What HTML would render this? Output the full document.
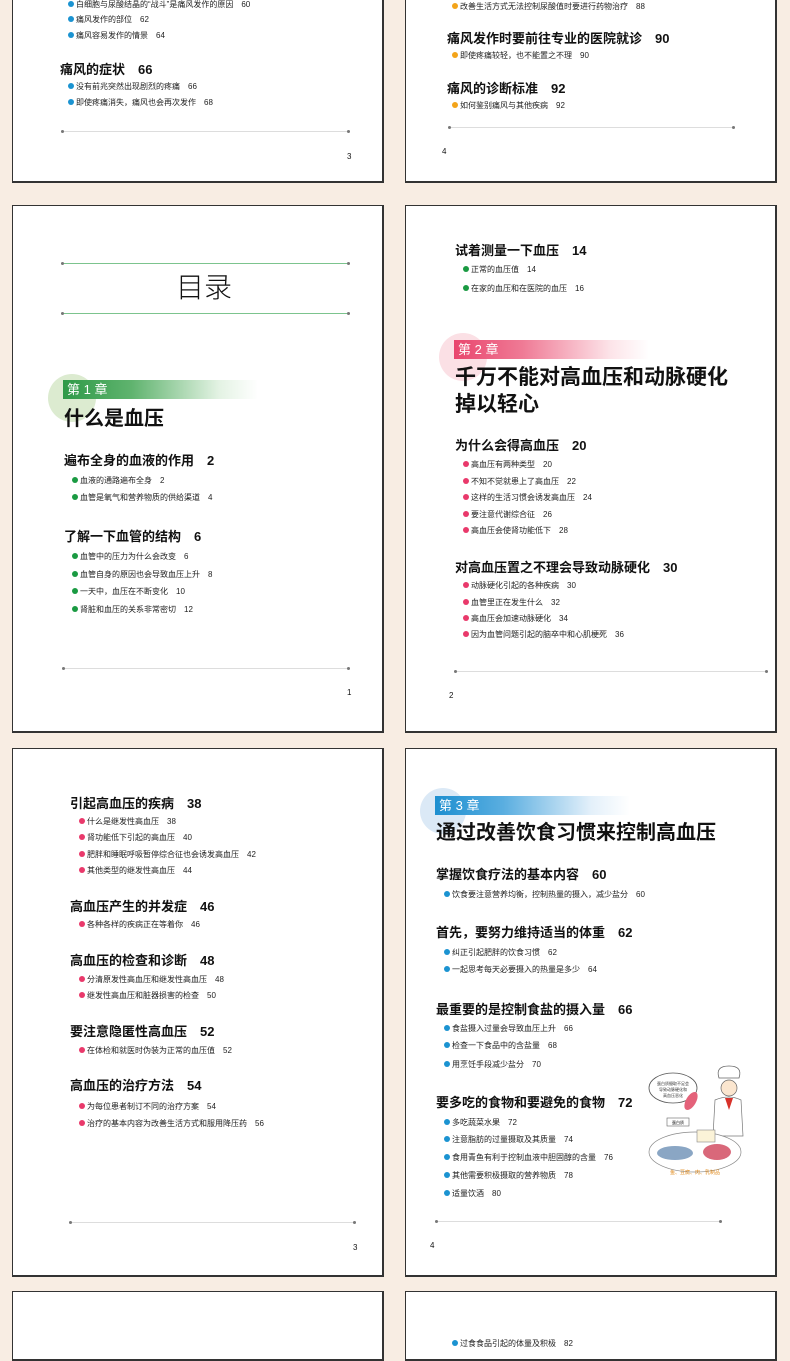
<!DOCTYPE html>
<html><head><meta charset="utf-8"><style>
*{margin:0;padding:0;box-sizing:border-box}
body{width:790px;height:1347px;background:#f8ede3;position:relative;overflow:hidden;font-family:"Liberation Sans","Noto Sans CJK SC",sans-serif;color:#111}
.p{position:absolute;background:#fff;border:1.5px solid #333;border-right-width:2px;border-bottom-width:2px}
.t{position:absolute;white-space:nowrap;line-height:1}
.h{font-size:13px;font-weight:bold}
.b{font-size:8px;color:#222}
.b i{display:inline-block;width:6px;height:6px;border-radius:50%;margin-right:2px;vertical-align:0}
.bl i{background:#1b93d1}.og i{background:#f3a41a}.gr i{background:#1a9a42}.pk i{background:#e9396b}
.ln{position:absolute;height:1px;background:#ddd}
.ln:before,.ln:after{content:"";position:absolute;top:-1px;width:3px;height:3px;border-radius:50%;background:#777}
.ln:before{left:0}.ln:after{right:0}
.ct{font-size:20px;font-weight:bold}
.pn{font-size:8px}
</style></head><body>

<!-- row1 -->
<div class="p" style="left:12px;top:-10px;width:372px;height:193px"></div>
<div class="p" style="left:405px;top:-10px;width:372px;height:193px"></div>
<div class="t b bl" style="left:68px;top:1px"><i></i>白细胞与尿酸结晶的“战斗”是痛风发作的原因　60</div>
<div class="t b bl" style="left:68px;top:16px"><i></i>痛风发作的部位　62</div>
<div class="t b bl" style="left:68px;top:32px"><i></i>痛风容易发作的情景　64</div>
<div class="t h" style="left:60px;top:63px">痛风的症状　66</div>
<div class="t b bl" style="left:68px;top:83px"><i></i>没有前兆突然出现剧烈的疼痛　66</div>
<div class="t b bl" style="left:68px;top:99px"><i></i>即使疼痛消失，痛风也会再次发作　68</div>
<div class="ln" style="left:61px;top:131px;width:289px"></div>
<div class="t pn" style="left:347px;top:153px">3</div>

<div class="t b og" style="left:452px;top:3px"><i></i>改善生活方式无法控制尿酸值时要进行药物治疗　88</div>
<div class="t h" style="left:447px;top:32px">痛风发作时要前往专业的医院就诊　90</div>
<div class="t b og" style="left:452px;top:52px"><i></i>即使疼痛较轻，也不能置之不理　90</div>
<div class="t h" style="left:447px;top:82px">痛风的诊断标准　92</div>
<div class="t b og" style="left:452px;top:102px"><i></i>如何鉴别痛风与其他疾病　92</div>
<div class="ln" style="left:448px;top:127px;width:287px"></div>
<div class="t pn" style="left:442px;top:148px">4</div>

<!-- row2 left -->
<div class="p" style="left:12px;top:205px;width:372px;height:528px"></div>
<div class="ln" style="left:61px;top:263px;width:289px;background:#7cc48e"></div>
<div class="t" style="left:18px;width:372px;text-align:center;top:274px;font-size:28px;font-weight:300">目录</div>
<div class="ln" style="left:61px;top:313px;width:289px;background:#7cc48e"></div>
<div style="position:absolute;left:48px;top:374px;width:48px;height:48px;border-radius:50%;background:#dcebd0"></div>
<div style="position:absolute;left:63px;top:380px;width:195px;height:19px;background:linear-gradient(90deg,#2f9a48 0%,#5fb36e 35%,rgba(200,230,200,.5) 80%,rgba(255,255,255,0))"></div>
<div class="t" style="left:67px;top:383px;font-size:13px;color:#fff">第 1 章</div>
<div class="t ct" style="left:64px;top:409px">什么是血压</div>
<div class="t h" style="left:64px;top:454px">遍布全身的血液的作用　2</div>
<div class="t b gr" style="left:72px;top:477px"><i></i>血液的通路遍布全身　2</div>
<div class="t b gr" style="left:72px;top:494px"><i></i>血管是氧气和营养物质的供给渠道　4</div>
<div class="t h" style="left:64px;top:530px">了解一下血管的结构　6</div>
<div class="t b gr" style="left:72px;top:553px"><i></i>血管中的压力为什么会改变　6</div>
<div class="t b gr" style="left:72px;top:571px"><i></i>血管自身的原因也会导致血压上升　8</div>
<div class="t b gr" style="left:72px;top:588px"><i></i>一天中，血压在不断变化　10</div>
<div class="t b gr" style="left:72px;top:606px"><i></i>肾脏和血压的关系非常密切　12</div>
<div class="ln" style="left:62px;top:668px;width:288px"></div>
<div class="t pn" style="left:347px;top:689px">1</div>

<!-- row2 right -->
<div class="p" style="left:405px;top:205px;width:372px;height:528px"></div>
<div class="t h" style="left:455px;top:244px">试着测量一下血压　14</div>
<div class="t b gr" style="left:463px;top:266px"><i></i>正常的血压值　14</div>
<div class="t b gr" style="left:463px;top:285px"><i></i>在家的血压和在医院的血压　16</div>
<div style="position:absolute;left:439px;top:333px;width:48px;height:48px;border-radius:50%;background:#fbe0e5"></div>
<div style="position:absolute;left:454px;top:340px;width:195px;height:19px;background:linear-gradient(90deg,#e9466e 0%,#ef7a95 35%,rgba(250,200,210,.5) 80%,rgba(255,255,255,0))"></div>
<div class="t" style="left:458px;top:343px;font-size:13px;color:#fff">第 2 章</div>
<div class="t ct" style="left:455px;top:367px;font-size:21px">千万不能对高血压和动脉硬化</div>
<div class="t ct" style="left:455px;top:394px;font-size:21px">掉以轻心</div>
<div class="t h" style="left:455px;top:439px">为什么会得高血压　20</div>
<div class="t b pk" style="left:463px;top:461px"><i></i>高血压有两种类型　20</div>
<div class="t b pk" style="left:463px;top:478px"><i></i>不知不觉就患上了高血压　22</div>
<div class="t b pk" style="left:463px;top:494px"><i></i>这样的生活习惯会诱发高血压　24</div>
<div class="t b pk" style="left:463px;top:511px"><i></i>要注意代谢综合征　26</div>
<div class="t b pk" style="left:463px;top:527px"><i></i>高血压会使肾功能低下　28</div>
<div class="t h" style="left:455px;top:561px">对高血压置之不理会导致动脉硬化　30</div>
<div class="t b pk" style="left:463px;top:582px"><i></i>动脉硬化引起的各种疾病　30</div>
<div class="t b pk" style="left:463px;top:599px"><i></i>血管里正在发生什么　32</div>
<div class="t b pk" style="left:463px;top:615px"><i></i>高血压会加速动脉硬化　34</div>
<div class="t b pk" style="left:463px;top:631px"><i></i>因为血管问题引起的脑卒中和心肌梗死　36</div>
<div class="ln" style="left:454px;top:671px;width:314px"></div>
<div class="t pn" style="left:449px;top:692px">2</div>

<!-- row3 left -->
<div class="p" style="left:12px;top:748px;width:372px;height:529px"></div>
<div class="t h" style="left:70px;top:797px">引起高血压的疾病　38</div>
<div class="t b pk" style="left:79px;top:818px"><i></i>什么是继发性高血压　38</div>
<div class="t b pk" style="left:79px;top:834px"><i></i>肾功能低下引起的高血压　40</div>
<div class="t b pk" style="left:79px;top:851px"><i></i>肥胖和睡眠呼吸暂停综合征也会诱发高血压　42</div>
<div class="t b pk" style="left:79px;top:867px"><i></i>其他类型的继发性高血压　44</div>
<div class="t h" style="left:70px;top:900px">高血压产生的并发症　46</div>
<div class="t b pk" style="left:79px;top:921px"><i></i>各种各样的疾病正在等着你　46</div>
<div class="t h" style="left:70px;top:954px">高血压的检查和诊断　48</div>
<div class="t b pk" style="left:79px;top:976px"><i></i>分清原发性高血压和继发性高血压　48</div>
<div class="t b pk" style="left:79px;top:992px"><i></i>继发性高血压和脏器损害的检查　50</div>
<div class="t h" style="left:70px;top:1025px">要注意隐匿性高血压　52</div>
<div class="t b pk" style="left:79px;top:1047px"><i></i>在体检和就医时伪装为正常的血压值　52</div>
<div class="t h" style="left:70px;top:1079px">高血压的治疗方法　54</div>
<div class="t b pk" style="left:79px;top:1103px"><i></i>为每位患者制订不同的治疗方案　54</div>
<div class="t b pk" style="left:79px;top:1120px"><i></i>治疗的基本内容为改善生活方式和服用降压药　56</div>
<div class="ln" style="left:69px;top:1222px;width:287px"></div>
<div class="t pn" style="left:353px;top:1244px">3</div>

<!-- row3 right -->
<div class="p" style="left:405px;top:748px;width:372px;height:529px"></div>
<div style="position:absolute;left:420px;top:788px;width:46px;height:46px;border-radius:50%;background:#dbe9f6"></div>
<div style="position:absolute;left:435px;top:796px;width:195px;height:19px;background:linear-gradient(90deg,#1d8fd0 0%,#5aaee0 35%,rgba(200,225,245,.5) 80%,rgba(255,255,255,0))"></div>
<div class="t" style="left:439px;top:799px;font-size:13px;color:#fff">第 3 章</div>
<div class="t ct" style="left:436px;top:823px">通过改善饮食习惯来控制高血压</div>
<div class="t h" style="left:436px;top:868px">掌握饮食疗法的基本内容　60</div>
<div class="t b bl" style="left:444px;top:891px"><i></i>饮食要注意营养均衡，控制热量的摄入，减少盐分　60</div>
<div class="t h" style="left:436px;top:926px">首先，要努力维持适当的体重　62</div>
<div class="t b bl" style="left:444px;top:949px"><i></i>纠正引起肥胖的饮食习惯　62</div>
<div class="t b bl" style="left:444px;top:966px"><i></i>一起思考每天必要摄入的热量是多少　64</div>
<div class="t h" style="left:436px;top:1003px">最重要的是控制食盐的摄入量　66</div>
<div class="t b bl" style="left:444px;top:1025px"><i></i>食盐摄入过量会导致血压上升　66</div>
<div class="t b bl" style="left:444px;top:1042px"><i></i>检查一下食品中的含盐量　68</div>
<div class="t b bl" style="left:444px;top:1061px"><i></i>用烹饪手段减少盐分　70</div>
<div class="t h" style="left:436px;top:1096px">要多吃的食物和要避免的食物　72</div>
<div class="t b bl" style="left:444px;top:1119px"><i></i>多吃蔬菜水果　72</div>
<div class="t b bl" style="left:444px;top:1136px"><i></i>注意脂肪的过量摄取及其质量　74</div>
<div class="t b bl" style="left:444px;top:1154px"><i></i>食用青鱼有利于控制血液中胆固醇的含量　76</div>
<div class="t b bl" style="left:444px;top:1172px"><i></i>其他需要积极摄取的营养物质　78</div>
<div class="t b bl" style="left:444px;top:1190px"><i></i>适量饮酒　80</div>
<svg style="position:absolute;left:645px;top:1060px" width="110" height="125" viewBox="0 0 110 125">
<ellipse cx="28" cy="28" rx="24" ry="15" fill="#fff" stroke="#555" stroke-width=".8"/>
<text x="28" y="25" font-size="4" text-anchor="middle" fill="#333">蛋白质摄取不足会</text>
<text x="28" y="31" font-size="4" text-anchor="middle" fill="#333">导致动脉硬化和</text>
<text x="28" y="37" font-size="4" text-anchor="middle" fill="#333">高血压恶化</text>
<path d="M74 18 q-4 -12 10 -12 q14 0 10 12 z" fill="#fff" stroke="#666" stroke-width=".8"/>
<circle cx="84" cy="28" r="8" fill="#fbe6cf" stroke="#666" stroke-width=".7"/>
<path d="M70 40 q14 -6 26 0 l2 36 h-30 z" fill="#fff" stroke="#777" stroke-width=".7"/>
<path d="M80 38 l4 12 l4 -12 z" fill="#d8322a"/>
<ellipse cx="46" cy="41" rx="5" ry="10" fill="#e4627a" transform="rotate(30 46 41)"/>
<rect x="22" y="58" width="22" height="8" fill="#fff" stroke="#666" stroke-width=".6"/>
<text x="33" y="64" font-size="4" text-anchor="middle">蛋白质</text>
<ellipse cx="50" cy="92" rx="46" ry="20" fill="#fff" stroke="#888" stroke-width=".7"/>
<rect x="52" y="70" width="18" height="12" fill="#fbf3d8" stroke="#888" stroke-width=".6"/>
<ellipse cx="30" cy="93" rx="18" ry="7" fill="#8aa6c4"/>
<ellipse cx="72" cy="92" rx="14" ry="8" fill="#d9687a"/>
<text x="50" y="114" font-size="5" text-anchor="middle" fill="#e08a1c">鱼、豆腐、肉、乳制品</text>
</svg>
<div class="ln" style="left:435px;top:1221px;width:287px"></div>
<div class="t pn" style="left:430px;top:1242px">4</div>

<!-- row4 -->
<div class="p" style="left:12px;top:1291px;width:372px;height:70px"></div>
<div class="p" style="left:405px;top:1291px;width:372px;height:70px"></div>
<div class="t b bl" style="left:452px;top:1340px"><i></i>过食食品引起的体量及积极　82</div>
</body></html>
